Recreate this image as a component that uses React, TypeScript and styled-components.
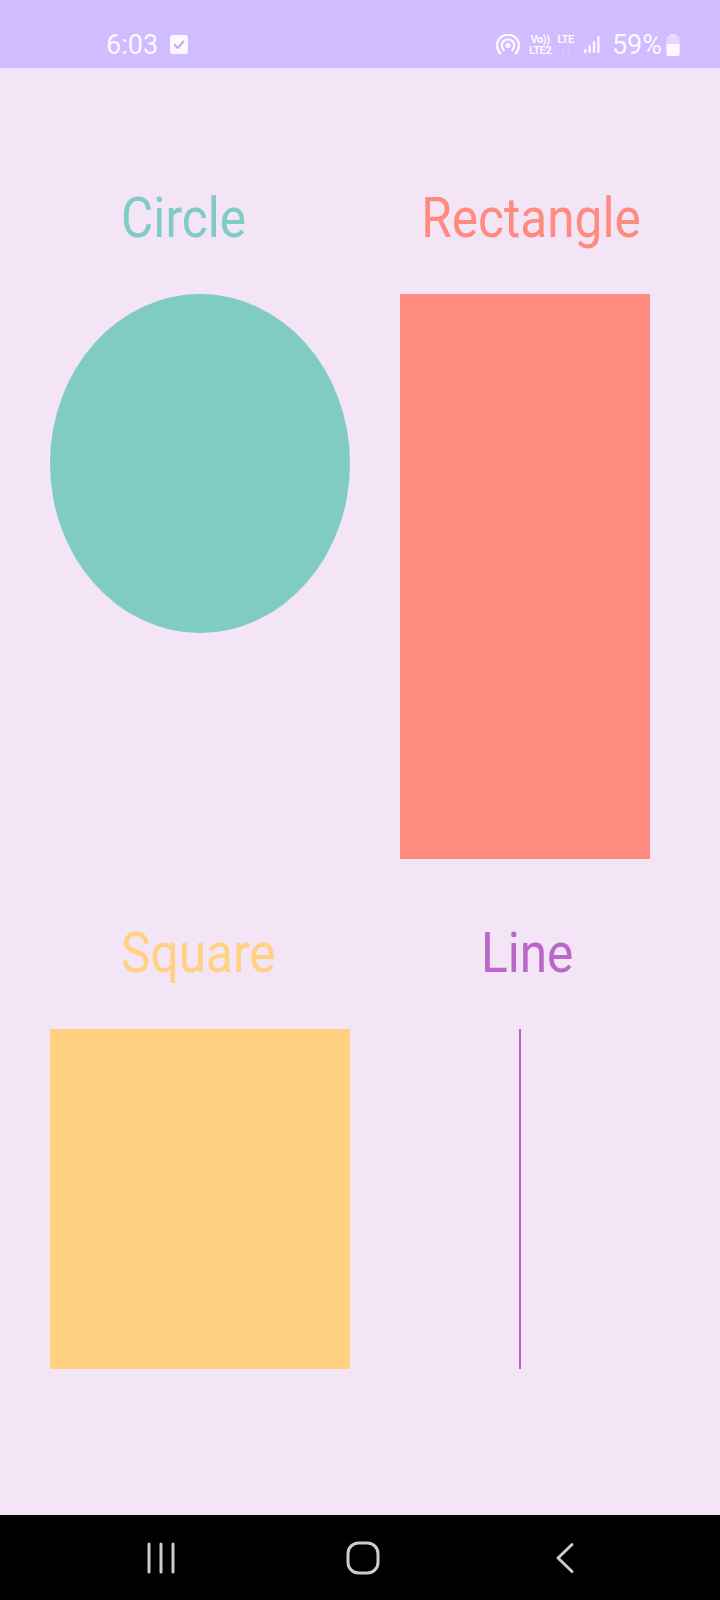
import React from "react";
import styled, { createGlobalStyle } from "styled-components";

const GlobalStyle = createGlobalStyle`
  html, body {
    margin: 0;
    padding: 0;
    background: #f3e5f5;
  }
  * { box-sizing: border-box; }
`;

const Screen = styled.div`
  width: 720px;
  height: 1600px;
  display: flex;
  flex-direction: column;
  background: #f3e5f5;
  font-family: Roboto, "Noto Sans", sans-serif;
  overflow: hidden;
`;

const StatusBar = styled.div`
  height: 68px;
  flex: 0 0 68px;
  background: #d0bcff;
  display: flex;
  align-items: center;
  padding: 21px 40px 0 106px;
  color: #ffffff;
`;

const StatusLeft = styled.div`
  display: flex;
  align-items: center;
  gap: 12px;
`;

const StatusRight = styled.div`
  margin-left: auto;
  display: flex;
  align-items: center;
`;

const StatusText = styled.span`
  font-size: 27px;
  line-height: 30px;
  font-weight: 400;
  color: #fbf8ff;
`;

const Slot = styled.div<{ $ml: number }>`
  display: flex;
  align-items: center;
  margin-left: ${(p) => p.$ml}px;
`;

const TinyStack = styled.div`
  display: flex;
  flex-direction: column;
  align-items: center;
  font-size: 11px;
  line-height: 11px;
  font-weight: 700;
  letter-spacing: -0.4px;
  color: #fbf8ff;
`;

const TinyDim = styled.span`
  opacity: 0.55;
  font-size: 10px;
`;

const Content = styled.div`
  flex: 1;
  padding: 117px 70px 0 50px;
`;

const ShapeGrid = styled.div`
  display: grid;
  grid-template-columns: 300px 250px;
  column-gap: 50px;
  row-gap: 61px;
  align-items: start;
`;

const Cell = styled.div`
  display: flex;
  flex-direction: column;
  align-items: center;
  gap: 43px;
`;

const Label = styled.div<{ $color: string; $dx: number }>`
  font-family: Roboto, "Noto Sans", sans-serif;
  font-size: 56px;
  line-height: 66px;
  height: 66px;
  font-weight: 400;
  white-space: nowrap;
  color: ${(p) => p.$color};
  transform: translateX(${(p) => p.$dx}px) scaleX(0.885);
  transform-origin: center;
`;

const Ellipse = styled.div`
  width: 300px;
  height: 339px;
  border-radius: 50%;
  background: #80cbc4;
`;

const Rectangle = styled.div`
  width: 250px;
  height: 565px;
  background: #ff8a80;
`;

const Square = styled.div`
  width: 300px;
  height: 340px;
  background: #ffd180;
`;

const VLine = styled.div`
  width: 1.5px;
  height: 340px;
  background: #ba68c8;
  margin-right: 10px;
`;

const NavBar = styled.div`
  height: 85px;
  flex: 0 0 85px;
  background: #000000;
  display: flex;
  align-items: center;
  padding: 0 54px 0 60px;
`;

const NavSlot = styled.div`
  flex: 1;
  display: flex;
  justify-content: center;
  align-items: center;
`;

const CheckIcon = () => (
  <svg width="18" height="19" viewBox="0 0 18 19">
    <rect x="0" y="0" width="18" height="19" rx="2.5" fill="#fbf8ff" />
    <polyline
      points="4.5,9.8 7.8,13 13.5,6.5"
      fill="none"
      stroke="#c2a9f7"
      strokeWidth="2"
      strokeLinecap="round"
      strokeLinejoin="round"
    />
  </svg>
);

const HotspotIcon = () => (
  <svg width="26" height="22" viewBox="0 0 26 22">
    <circle cx="13" cy="11.5" r="2.6" fill="#fbf8ff" />
    <path
      d="M8.6 15.9 A6.2 6.2 0 1 1 17.4 15.9"
      fill="none"
      stroke="#fbf8ff"
      strokeWidth="2.4"
      strokeLinecap="round"
    />
    <path
      d="M5.2 19.3 A11 11 0 1 1 20.8 19.3"
      fill="none"
      stroke="#fbf8ff"
      strokeWidth="2.4"
      strokeLinecap="round"
    />
  </svg>
);

const SignalIcon = () => (
  <svg width="16" height="17" viewBox="0 0 16 17">
    <rect x="0" y="13" width="2.4" height="4" rx="1" fill="#fbf8ff" />
    <rect x="4.4" y="9" width="2.4" height="8" rx="1" fill="#fbf8ff" />
    <rect x="8.8" y="5" width="2.4" height="12" rx="1" fill="#fbf8ff" />
    <rect x="13.2" y="0" width="2.4" height="17" rx="1" fill="#fbf8ff" />
  </svg>
);

const BatteryIcon = () => (
  <svg width="14" height="22" viewBox="0 0 14 22">
    <rect x="4" y="0" width="6" height="2.5" rx="0.8" fill="#fbf8ff" opacity="0.6" />
    <rect x="0.5" y="2" width="13" height="20" rx="2" fill="#fbf8ff" opacity="0.45" />
    <path d="M0.5 10 H13.5 V20 A2 2 0 0 1 11.5 22 H2.5 A2 2 0 0 1 0.5 20 Z" fill="#fbf8ff" />
  </svg>
);

const RecentsIcon = () => (
  <svg width="30" height="32" viewBox="0 0 30 32">
    <line x1="3" y1="2" x2="3" y2="30" stroke="#cccccc" strokeWidth="3" strokeLinecap="round" />
    <line x1="15" y1="2" x2="15" y2="30" stroke="#cccccc" strokeWidth="3" strokeLinecap="round" />
    <line x1="27" y1="2" x2="27" y2="30" stroke="#cccccc" strokeWidth="3" strokeLinecap="round" />
  </svg>
);

const HomeIcon = () => (
  <svg width="34" height="34" viewBox="0 0 34 34">
    <rect x="2" y="2" width="30" height="30" rx="10.5" fill="none" stroke="#cccccc" strokeWidth="3" />
  </svg>
);

const BackIcon = () => (
  <svg width="20" height="32" viewBox="0 0 20 32">
    <polyline
      points="17,2.5 3,16 17,29.5"
      fill="none"
      stroke="#cccccc"
      strokeWidth="3"
      strokeLinecap="round"
      strokeLinejoin="round"
    />
  </svg>
);

export default function App() {
  return (
    <>
      <GlobalStyle />
      <Screen>
        <StatusBar>
          <StatusLeft>
            <StatusText>6:03</StatusText>
            <CheckIcon />
          </StatusLeft>
          <StatusRight>
            <Slot $ml={0}>
              <HotspotIcon />
            </Slot>
            <Slot $ml={8}>
              <TinyStack>
                <span>Vo))</span>
                <span>LTE2</span>
              </TinyStack>
            </Slot>
            <Slot $ml={6}>
              <TinyStack>
                <span>LTE</span>
                <TinyDim>↓↑</TinyDim>
              </TinyStack>
            </Slot>
            <Slot $ml={10}>
              <SignalIcon />
            </Slot>
            <Slot $ml={12}>
              <StatusText>59%</StatusText>
            </Slot>
            <Slot $ml={4}>
              <BatteryIcon />
            </Slot>
          </StatusRight>
        </StatusBar>

        <Content>
          <ShapeGrid>
            <Cell>
              <Label $color="#80cbc4" $dx={-16}>Circle</Label>
              <Ellipse />
            </Cell>
            <Cell>
              <Label $color="#ff8a80" $dx={6}>Rectangle</Label>
              <Rectangle />
            </Cell>
            <Cell>
              <Label $color="#ffd180" $dx={-2}>Square</Label>
              <Square />
            </Cell>
            <Cell>
              <Label $color="#ba68c8" $dx={2}>Line</Label>
              <VLine />
            </Cell>
          </ShapeGrid>
        </Content>

        <NavBar>
          <NavSlot>
            <RecentsIcon />
          </NavSlot>
          <NavSlot>
            <HomeIcon />
          </NavSlot>
          <NavSlot>
            <BackIcon />
          </NavSlot>
        </NavBar>
      </Screen>
    </>
  );
}
